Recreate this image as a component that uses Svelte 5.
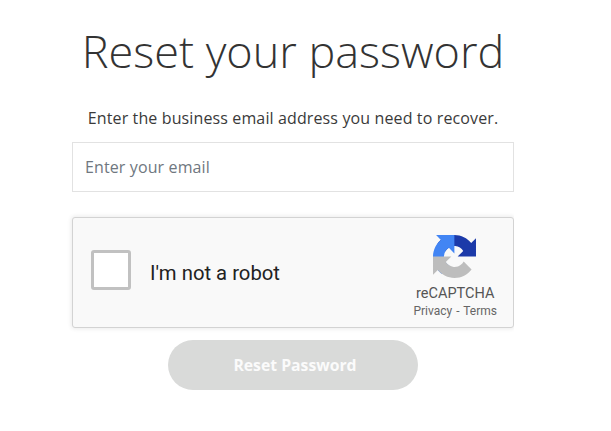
<script lang="ts">
  let email = $state("");
</script>

<main class="page">
  <h1>Reset your password</h1>
  <p class="hint">Enter the business email address you need to recover.</p>

  <input class="email" type="email" placeholder="Enter your email" bind:value={email} />

  <div class="captcha">
    <div class="check"></div>
    <span class="robot">I'm not a robot</span>
    <div class="brand">
      <svg class="logo" viewBox="0 0 64 64" aria-hidden="true">
        <path d="M64 31.955l-.033-1.37V4.687l-7.16 7.16C50.948 4.674 42.033.093 32.05.093c-10.4 0-19.622 4.96-25.458 12.64l11.736 11.86a15.55 15.55 0 0 1 4.754-5.334c2.05-1.6 4.952-2.906 8.968-2.906.485 0 .86.057 1.135.163 4.976.393 9.288 3.14 11.828 7.124l-8.307 8.307c10.522-.04 22.4-.066 27.295.006" fill="#1c3aa9" />
        <path d="M31.862.094l-1.37.033H4.594l7.16 7.16C4.58 13.147 0 22.06 0 32.046c0 10.4 4.96 19.622 12.64 25.458L24.5 45.768a15.55 15.55 0 0 1-5.334-4.754c-1.6-2.05-2.906-4.952-2.906-8.968 0-.485.057-.86.163-1.135.393-4.976 3.14-9.288 7.124-11.828l8.307 8.307c-.04-10.522-.066-22.4.006-27.295" fill="#4285f4" />
        <path d="M.001 32.045l.033 1.37v25.898l7.16-7.16c5.86 7.173 14.774 11.754 24.76 11.754 10.4 0 19.622-4.96 25.458-12.64l-11.736-11.86a15.55 15.55 0 0 1-4.754 5.334c-2.05 1.6-4.952 2.906-8.968 2.906-.485 0-.86-.057-1.135-.163-4.976-.393-9.288-3.14-11.828-7.124l8.307-8.307c-10.522.04-22.4.066-27.295-.006" fill="#bdbdbd" />
      </svg>
      <span class="name">reCAPTCHA</span>
      <span class="links">Privacy <i>-</i> Terms</span>
    </div>
  </div>

  <button class="submit" type="button">Reset Password</button>
</main>

<style>
  :global(body) {
    margin: 0;
    background: #fff;
  }
  .page {
    box-sizing: border-box;
    width: 514px;
    height: 431px;
    padding: 18px 0 0 72px;
    display: flex;
    flex-direction: column;
    align-items: center;
    font-family: "Open Sans", sans-serif;
    color: #333;
    overflow: hidden;
  }
  h1 {
    margin: 0;
    font-size: 45px;
    line-height: 65px;
    font-weight: 300;
    color: #333;
    white-space: nowrap;
  }
  .hint {
    margin: 24px 0 0;
    font-size: 16px;
    line-height: 22px;
    letter-spacing: 0.125px;
    color: #3a3a3a;
    white-space: nowrap;
  }
  .email {
    box-sizing: border-box;
    width: 442px;
    height: 50px;
    margin-top: 13px;
    padding: 0 12px;
    border: 1px solid #e2e2e2;
    border-radius: 0;
    outline: none;
    font: 16px "Open Sans", sans-serif;
    letter-spacing: 0.12px;
    color: #333;
  }
  .email::placeholder {
    color: #6f7780;
    opacity: 1;
  }
  .captcha {
    box-sizing: border-box;
    width: 442px;
    height: 111px;
    margin-top: 25px;
    display: flex;
    align-items: center;
    padding: 0 16px 0 18px;
    background: #f9f9f9;
    border: 1px solid #d3d3d3;
    border-radius: 3px;
    box-shadow: 0 0 4px 1px rgba(0, 0, 0, 0.08);
  }
  .check {
    box-sizing: border-box;
    width: 40px;
    height: 40px;
    margin-top: -5px;
    background: #fff;
    border: 3px solid #c1c1c1;
    border-radius: 3px;
    flex: none;
  }
  .robot {
    margin-left: 19px;
    font: 20.3px Roboto, sans-serif;
    color: #222;
  }
  .brand {
    margin-left: auto;
    padding-top: 8px;
    display: flex;
    flex-direction: column;
    align-items: center;
    font-family: Roboto, sans-serif;
    color: #555;
  }
  .logo {
    width: 43px;
    height: 43px;
    margin: -1px 1px 1px 0;
  }
  .name {
    margin-top: 7px;
    font-size: 14.5px;
    line-height: 16px;
  }
  .links {
    margin-top: 2px;
    font-size: 12px;
    line-height: 14px;
    color: #666;
  }
  .links i {
    font-style: normal;
    margin: 0 1px;
  }
  .submit {
    width: 250px;
    height: 50px;
    margin-top: 12px;
    padding: 0 0 0 4px;
    border: 0;
    border-radius: 25px;
    background: #d9dad9;
    color: #fbfbfb;
    font: 700 15.75px "Open Sans", sans-serif;
  }
</style>
